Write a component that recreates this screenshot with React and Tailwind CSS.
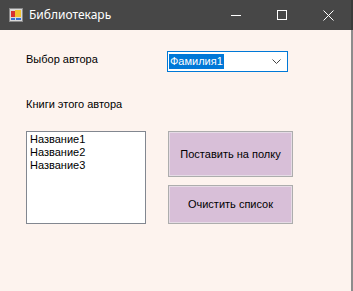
import React from "react";

// WinForms window "Библиотекарь" with an author combo, books list and two buttons
export default function App() {
  const books = ["Название1", "Название2", "Название3"];

  return (
    <div className="w-[353px] h-[291px] flex flex-col overflow-hidden bg-[#fdf3ee]">
      {/* Title bar */}
      <div className="h-[30px] shrink-0 bg-[#474747] flex items-center text-white">
        <svg width="14" height="14" viewBox="0 0 14 14" className="ml-[9px]">
          <rect x="0.5" y="0.5" width="13" height="13" fill="#d9d9d9" stroke="#8a8a8a" />
          <rect x="2" y="3" width="4" height="6" fill="#d93030" />
          <rect x="6" y="2" width="6" height="7" fill="#f2c230" />
          <rect x="2" y="10" width="4" height="2" fill="#3a6fd0" />
          <rect x="7" y="10" width="5" height="2" fill="#3a6fd0" />
        </svg>
        <span className="ml-[6px] text-[12px] leading-none font-['Noto_Sans',sans-serif]">
          Библиотекарь
        </span>
        <div className="ml-auto flex items-center h-full">
          <div className="w-[46px] h-full flex items-center justify-center">
            <div className="w-[10px] h-px bg-white" />
          </div>
          <div className="w-[46px] h-full flex items-center justify-center">
            <div className="w-[10px] h-[10px] border border-white" />
          </div>
          <div className="w-[46px] h-full flex items-center justify-center">
            <svg width="11" height="11" viewBox="0 0 11 11">
              <path d="M0.5 0.5L10.5 10.5M10.5 0.5L0.5 10.5" stroke="#fff" strokeWidth="1" />
            </svg>
          </div>
          <div className="w-[2px] h-full bg-[#3a3a3a]" />
        </div>
      </div>

      {/* Client area */}
      <div className="flex-1 flex border-r-2 border-[#8c8c8c] text-[11px] leading-[13px] text-black font-['Liberation_Sans',Arial,sans-serif]">
        <div className="flex flex-col pl-[26px] w-full">
          <div className="flex items-start mt-[21px]">
            <div className="w-[141px] pt-[2px]">Выбор автора</div>
            <div className="w-[121px] h-[21px] bg-white border border-[#0078d7] flex items-center pl-[1px] pr-[6px]">
              <span className="bg-[#0078d7] text-white px-[1px] leading-[15px]">Фамилия1</span>
              <svg width="9" height="5" viewBox="0 0 9 5" className="ml-auto">
                <path d="M0.5 0.5L4.5 4.5L8.5 0.5" stroke="#444" fill="none" strokeWidth="1" />
              </svg>
            </div>
          </div>

          <div className="mt-[26px]">Книги этого автора</div>

          <div className="flex items-start mt-[20px]">
            <div className="w-[120px] h-[93px] bg-white border border-[#828790] px-[3px] py-[1px]">
              {books.map((b) => (
                <div key={b}>{b}</div>
              ))}
            </div>
            <div className="ml-[22px] flex flex-col gap-[8px]">
              <button className="w-[125px] h-[46px] bg-[#d8bfd8] border border-[#adadad] shadow-[inset_0_0_0_1px_#e6dbe6] flex items-center justify-center">
                Поставить на полку
              </button>
              <button className="w-[125px] h-[39px] bg-[#d8bfd8] border border-[#adadad] shadow-[inset_0_0_0_1px_#e6dbe6] flex items-center justify-center">
                Очистить список
              </button>
            </div>
          </div>
        </div>
      </div>
    </div>
  );
}
